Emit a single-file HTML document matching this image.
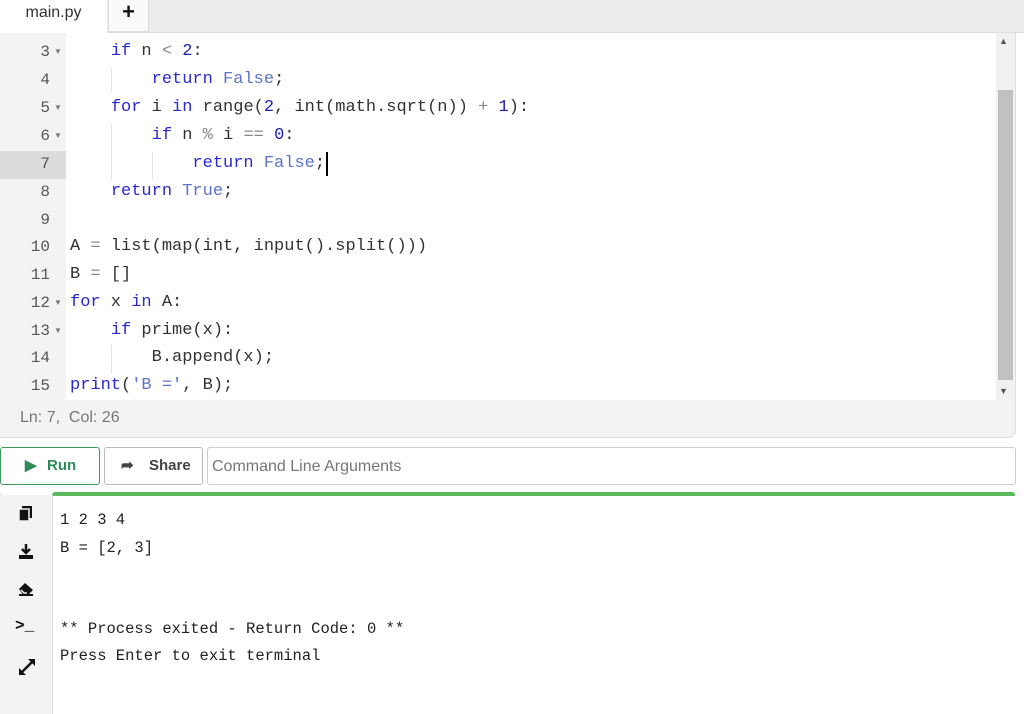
<!DOCTYPE html>
<html><head><style>
body{margin:0;width:1024px;height:714px;background:#fff;font-family:"Liberation Sans",sans-serif;overflow:hidden;position:relative}
.abs{position:absolute}
.tabs{left:0;top:0;width:1024px;height:32px;background:#ececec;border-bottom:1px solid #ddd}
.tab1{left:0;top:0;width:107px;height:33px;background:#fff;font-size:16px;color:#333;line-height:26px;text-align:center}
.tab2{left:108px;top:0;width:39px;height:31px;background:#fafafa;border:1px solid #ddd;border-top:0;font-size:22px;font-weight:bold;line-height:24px;text-align:center;color:#111}
.editor{left:0;top:33px;width:1015px;height:404px;background:#f3f3f3;border-right:1px solid #ddd;border-bottom:1px solid #ddd;border-radius:0 0 8px 0}
.code{left:66px;top:33px;width:930px;height:367px;background:#fff}
.gutter{left:0;top:33px;width:66px;height:367px;background:#f3f3f3}
.ln{position:absolute;left:0;width:50px;text-align:right;font-family:"Liberation Mono",monospace;font-size:16px;color:#555;height:28px;line-height:28px}
.fa{position:absolute;left:54px;font-size:8px;color:#777;line-height:28px}
.cl{position:absolute;left:70px;font-family:"Liberation Mono",monospace;font-size:17px;color:#333;white-space:pre;line-height:28px;height:28px}
.k{color:#2a2ad0}.c{color:#5b74c8}.n{color:#2020b0}.o{color:#888}
.guide{position:absolute;width:1px;background:#e4e4e4}
.sb{left:996px;top:33px;width:18px;height:367px;background:#f1f1f1}
.thumb{left:998px;top:90px;width:15px;height:290px;background:#c1c1c1}
.btn{top:447px;height:36px;border:1px solid #bbb;border-radius:3px;background:#fff;font-weight:bold;font-size:15px;line-height:36px;color:#444}
.out{left:0;top:493px;width:1015px;height:221px;background:#fff;border-left:1px solid #ddd}
.side{left:0;top:495px;width:52px;height:219px;background:#f3f3f3;border-right:1px solid #ddd}
.ot{position:absolute;left:60px;font-family:"Liberation Mono",monospace;font-size:15.5px;color:#222;white-space:pre;line-height:28px}
.ic{position:absolute;left:17px}
</style></head><body>
<div class="abs tabs"></div>
<div class="abs tab1">main.py</div>
<div class="abs tab2">+</div>
<div class="abs editor"></div>
<div class="abs gutter"></div>
<div class="abs" style="left:0;top:151px;width:66px;height:28px;background:#dcdcdc"></div>
<div class="abs code"></div>
<div class="abs sb"></div>
<div class="abs thumb"></div>
<div class="abs" style="left:999px;top:36px;font-size:9px;color:#555">▲</div>
<div class="abs" style="left:999px;top:386px;font-size:9px;color:#555">▼</div>
<div class="abs" style="left:0;top:0">
<div class="guide" style="left:111px;top:68px;height:24px"></div>
<div class="guide" style="left:111px;top:124px;height:56px"></div>
<div class="guide" style="left:152px;top:152px;height:28px"></div>
<div class="guide" style="left:111px;top:345px;height:28px"></div>
<div class="ln" style="top:38px">3</div><span class="fa" style="top:38px">▼</span>
<div class="ln" style="top:66px">4</div>
<div class="ln" style="top:94px">5</div><span class="fa" style="top:94px">▼</span>
<div class="ln" style="top:122px">6</div><span class="fa" style="top:122px">▼</span>
<div class="ln" style="top:150px">7</div>
<div class="ln" style="top:178px">8</div>
<div class="ln" style="top:206px">9</div>
<div class="ln" style="top:233px">10</div>
<div class="ln" style="top:261px">11</div>
<div class="ln" style="top:289px">12</div><span class="fa" style="top:289px">▼</span>
<div class="ln" style="top:317px">13</div><span class="fa" style="top:317px">▼</span>
<div class="ln" style="top:344px">14</div>
<div class="ln" style="top:372px">15</div>
<div class="cl" style="top:38px">    <span class="k">if</span> n <span class="o">&lt;</span> <span class="n">2</span>:</div>
<div class="cl" style="top:66px">        <span class="k">return</span> <span class="c">False</span>;</div>
<div class="cl" style="top:94px">    <span class="k">for</span> i <span class="k">in</span> range(<span class="n">2</span>, int(math.sqrt(n)) <span class="o">+</span> <span class="n">1</span>):</div>
<div class="cl" style="top:122px">        <span class="k">if</span> n <span class="o">%</span> i <span class="o">==</span> <span class="n">0</span>:</div>
<div class="cl" style="top:150px">            <span class="k">return</span> <span class="c">False</span>;</div>
<div class="abs" style="left:326px;top:152px;width:2px;height:24px;background:#000"></div>
<div class="cl" style="top:178px">    <span class="k">return</span> <span class="c">True</span>;</div>
<div class="cl" style="top:233px">A <span class="o">=</span> list(map(int, input().split()))</div>
<div class="cl" style="top:261px">B <span class="o">=</span> []</div>
<div class="cl" style="top:289px"><span class="k">for</span> x <span class="k">in</span> A:</div>
<div class="cl" style="top:317px">    <span class="k">if</span> prime(x):</div>
<div class="cl" style="top:344px">        B.append(x);</div>
<div class="cl" style="top:372px"><span class="k">print</span>(<span class="c">'B ='</span>, B);</div>
</div>
<div class="abs" style="left:20px;top:409px;font-size:16px;color:#777">Ln: 7,&nbsp; Col: 26</div>
<div class="abs btn" style="left:0;width:98px;border-color:#3a9a5a;color:#2e8b57"><span style="position:absolute;left:24px;top:0;font-size:15px">▶</span><span style="position:absolute;left:46px">Run</span></div>
<div class="abs btn" style="left:104px;width:97px"><span style="position:absolute;left:16px;font-size:15px">➦</span><span style="position:absolute;left:44px">Share</span></div>
<div class="abs" style="left:207px;top:447px;width:803px;height:36px;border:1px solid #ccc;border-radius:3px;font-size:16px;line-height:38px;color:#777;padding-left:4px">Command Line Arguments</div>
<div class="abs out"></div>
<div class="abs" style="left:52px;top:492px;width:963px;height:4px;background:#5cb85c;border-radius:3px 3px 0 0"></div>
<div class="abs side"></div>
<svg class="ic" style="top:505px" width="18" height="18" viewBox="0 0 18 18"><rect x="5" y="1" width="10" height="12" fill="#111"/><rect x="2" y="4" width="10" height="12" fill="#111" stroke="#f3f3f3" stroke-width="1.5"/></svg>
<svg class="ic" style="top:542px" width="18" height="18" viewBox="0 0 18 18"><path d="M9 2v9M5 7l4 4 4-4" stroke="#111" stroke-width="2.5" fill="none"/><rect x="2" y="13" width="14" height="4" fill="#111"/></svg>
<svg class="ic" style="top:580px" width="18" height="16" viewBox="0 0 18 16"><path d="M2 9l6-6 8 7-5 5H6z" fill="#111"/><path d="M4 10l3 3h3" stroke="#f3f3f3" stroke-width="1.5" fill="none"/><rect x="2" y="14" width="14" height="2" fill="#111"/></svg>
<div class="abs" style="left:15px;top:617px;font-size:16px;font-weight:bold;color:#111;font-family:'Liberation Mono',monospace">&gt;_</div>
<svg class="ic" style="top:657px" width="20" height="20" viewBox="0 0 20 20"><path d="M4 16L16 4" stroke="#111" stroke-width="2.5"/><path d="M2 18v-7l7 7zM18 2v7l-7-7z" fill="#111"/></svg>
<div class="ot" style="top:506px">1 2 3 4</div>
<div class="ot" style="top:534px">B = [2, 3]</div>
<div class="ot" style="top:615px">** Process exited - Return Code: 0 **</div>
<div class="ot" style="top:642px">Press Enter to exit terminal</div>
</body></html>
